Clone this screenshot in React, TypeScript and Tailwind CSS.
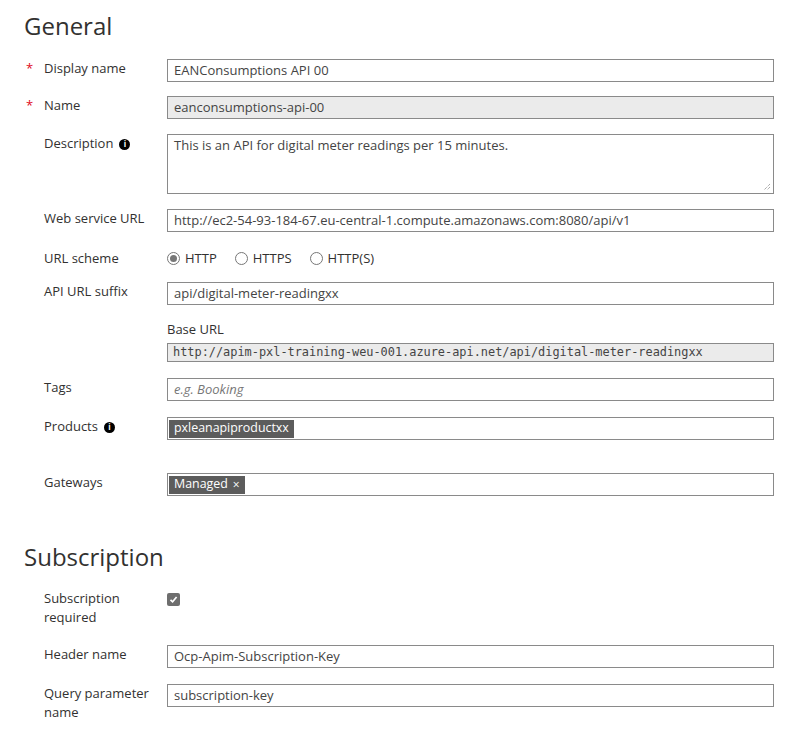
import React from 'react';

const font = "font-['Segoe_UI','Open_Sans',sans-serif]";

function InfoIcon() {
  return (
    <span className="ml-1.5 inline-flex h-[11px] w-[11px] items-center justify-center rounded-full bg-black text-[8px] font-bold leading-none text-white align-[1px]">
      i
    </span>
  );
}

function Label({ text, required, info }: { text: React.ReactNode; required?: boolean; info?: boolean }) {
  return (
    <div className="flex w-[143px] shrink-0 text-[13px] leading-[19px] text-[#323130]">
      <span className="w-[20px] pl-[2px] text-[#e00b1c]">{required ? '*' : ''}</span>
      <span className="flex-1 pr-2">
        {text}
        {info && <InfoIcon />}
      </span>
    </div>
  );
}

function TextBox({ value, disabled, placeholder }: { value?: string; disabled?: boolean; placeholder?: string }) {
  return (
    <div
      className={`flex h-[23px] flex-1 items-center border border-[#8a8a8a] px-[6px] text-[13px] ${
        disabled ? 'bg-[#ebebeb] text-[#444]' : 'bg-white text-[#444]'
      }`}
    >
      {placeholder ? <span className="italic text-[#777]">{placeholder}</span> : value}
    </div>
  );
}

function Chip({ text, close }: { text: string; close?: boolean }) {
  return (
    <span className="inline-flex h-[18px] items-center bg-[#5c5c5c] px-[5px] text-[12.4px] text-white">
      {text}
      {close && <span className="ml-[5px] text-[12px]">×</span>}
    </span>
  );
}

function Radio({ label, checked }: { label: string; checked?: boolean }) {
  return (
    <span className="mr-[18px] inline-flex items-center text-[13px] text-[#323130]">
      <span className="mr-[5px] flex h-[13px] w-[13px] items-center justify-center rounded-full border border-[#777] bg-white">
        {checked && <span className="h-[7px] w-[7px] rounded-full bg-[#777]" />}
      </span>
      {label}
    </span>
  );
}

export default function App() {
  return (
    <div className={`min-h-screen bg-white pl-[24px] pr-[20px] pt-[10px] ${font}`}>
      {/* General */}
      <h2 className="mb-[17px] text-[24px] leading-[32px] text-[#323130]">General</h2>

      <div className="flex items-start">
        <Label text="Display name" required />
        <TextBox value="EANConsumptions API 00" />
      </div>

      <div className="mt-[14px] flex items-start">
        <Label text="Name" required />
        <TextBox value="eanconsumptions-api-00" disabled />
      </div>

      <div className="mt-[15px] flex items-start">
        <Label text="Description" info />
        <div className="relative h-[60px] flex-1 border border-[#8a8a8a] px-[6px] pt-[1px] text-[13px] text-[#444]">
          This is an API for digital meter readings per 15 minutes.
          <svg className="absolute bottom-[2px] right-[2px]" width="8" height="8" viewBox="0 0 8 8">
            <path d="M7 1 L1 7 M7 4 L4 7" stroke="#888" strokeWidth="1" strokeDasharray="1 1" />
          </svg>
        </div>
      </div>

      <div className="mt-[15px] flex items-start">
        <Label text="Web service URL" />
        <TextBox value="http://ec2-54-93-184-67.eu-central-1.compute.amazonaws.com:8080/api/v1" />
      </div>

      <div className="mt-[17px] flex items-start">
        <Label text="URL scheme" />
        <div className="flex h-[19px] items-center">
          <Radio label="HTTP" checked />
          <Radio label="HTTPS" />
          <Radio label="HTTP(S)" />
        </div>
      </div>

      <div className="mt-[14px] flex items-start">
        <Label text="API URL suffix" />
        <TextBox value="api/digital-meter-readingxx" />
      </div>

      <div className="mt-[15px] flex items-start">
        <Label text="" />
        <div className="flex-1">
          <div className="mb-[4px] text-[13px] leading-[19px] text-[#323130]">Base URL</div>
          <div className="flex h-[19px] items-center border border-[#8a8a8a] bg-[#ebebeb] px-[5px] font-['DejaVu_Sans_Mono',monospace] text-[11.9px] text-[#444]">
            http://apim-pxl-training-weu-001.azure-api.net/api/digital-meter-readingxx
          </div>
        </div>
      </div>

      <div className="mt-[16px] flex items-start">
        <Label text="Tags" />
        <TextBox placeholder="e.g. Booking" />
      </div>

      <div className="mt-[16px] flex items-start">
        <Label text="Products" info />
        <div className="flex h-[23px] flex-1 items-center border border-[#8a8a8a] px-[1px]">
          <Chip text="pxleanapiproductxx" />
        </div>
      </div>

      <div className="mt-[33px] flex items-start">
        <Label text="Gateways" />
        <div className="flex h-[23px] flex-1 items-center border border-[#8a8a8a] px-[1px]">
          <Chip text="Managed" close />
        </div>
      </div>

      {/* Subscription */}
      <h2 className="mt-[45px] mb-[16px] text-[24px] leading-[32px] text-[#323130]">Subscription</h2>

      <div className="flex items-start">
        <Label text={<>Subscription<br />required</>} />
        <span className="mt-[4px] flex h-[13px] w-[13px] items-center justify-center rounded-[2px] bg-[#6e6e6e]">
          <svg width="9" height="9" viewBox="0 0 9 9">
            <path d="M1.5 4.8 L3.6 6.8 L7.6 2" stroke="white" strokeWidth="1.7" fill="none" />
          </svg>
        </span>
      </div>

      <div className="mt-[18px] flex items-start">
        <Label text="Header name" />
        <TextBox value="Ocp-Apim-Subscription-Key" />
      </div>

      <div className="mt-[16px] flex items-start">
        <Label text={<>Query parameter<br />name</>} />
        <TextBox value="subscription-key" />
      </div>
    </div>
  );
}
